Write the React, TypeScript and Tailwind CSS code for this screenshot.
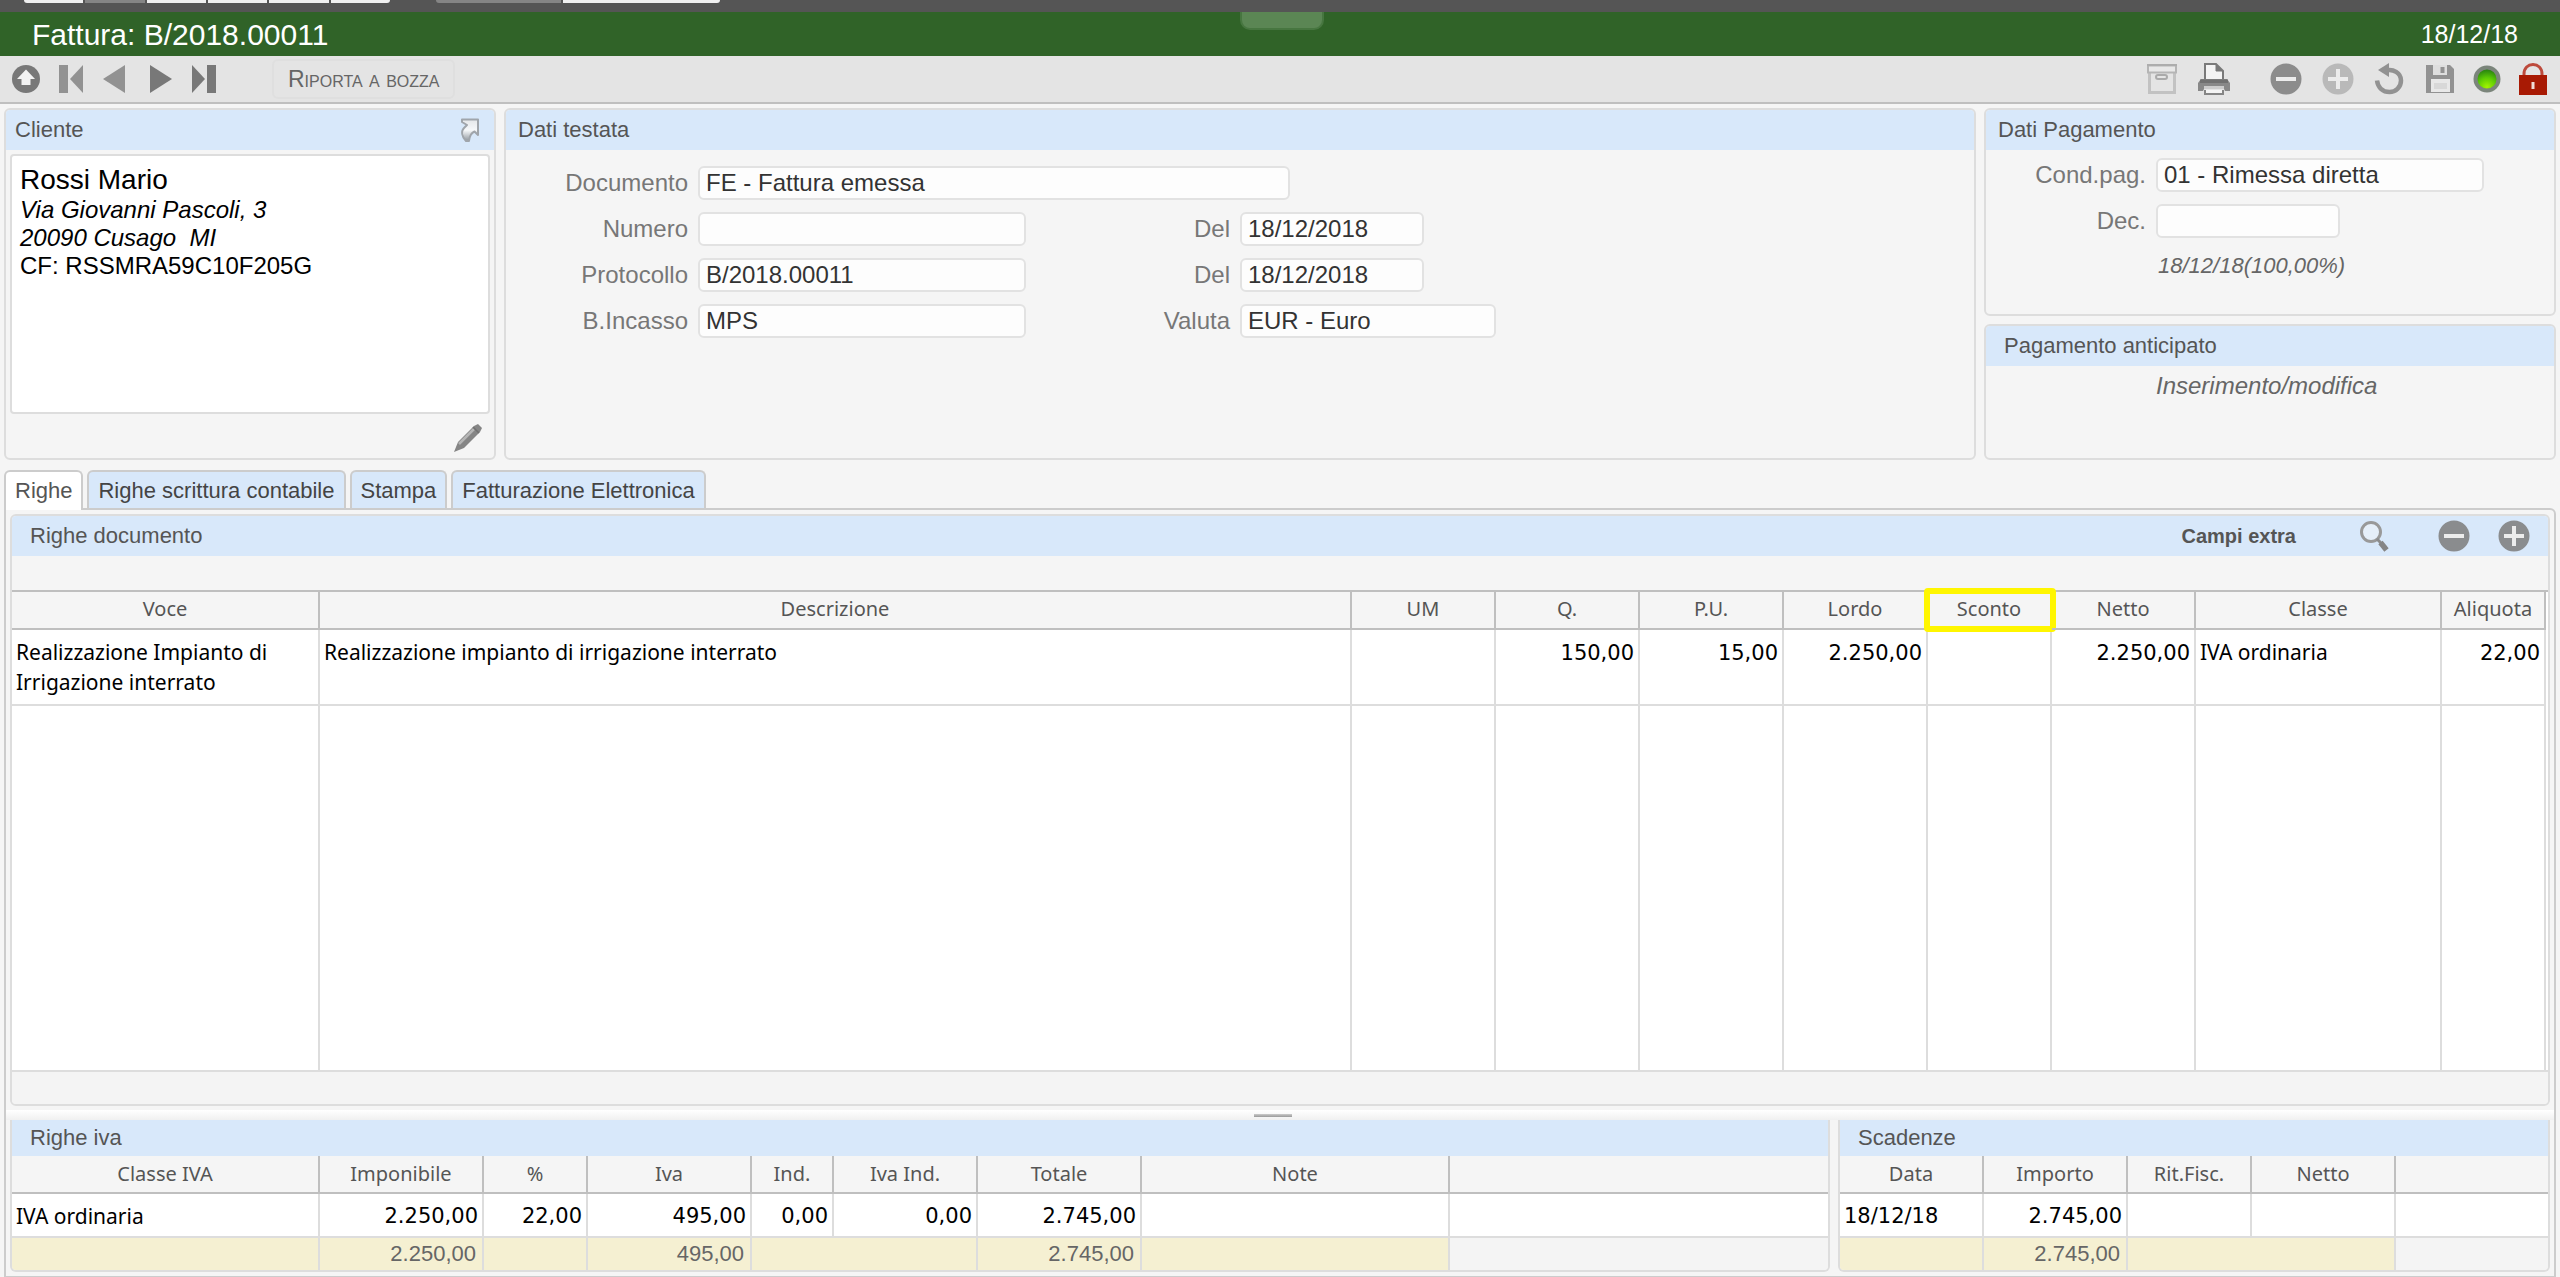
import React from 'react';

type Align = 'left' | 'right';

interface Column {
  label: string;
  width?: string;
  align?: Align;
}

const rowColumns: Column[] = [
  { label: 'Voce', width: 'w-[308px]' },
  { label: 'Descrizione' },
  { label: 'UM', width: 'w-36' },
  { label: 'Q.', width: 'w-36', align: 'right' },
  { label: 'P.U.', width: 'w-36', align: 'right' },
  { label: 'Lordo', width: 'w-36', align: 'right' },
  { label: 'Sconto', width: 'w-[124px]', align: 'right' },
  { label: 'Netto', width: 'w-36', align: 'right' },
  { label: 'Classe', width: 'w-[246px]' },
  { label: 'Aliquota', width: 'w-[104px]', align: 'right' },
];

const rowValues = [
  'Realizzazione Impianto di Irrigazione interrato',
  'Realizzazione impianto di irrigazione interrato',
  '',
  '150,00',
  '15,00',
  '2.250,00',
  '',
  '2.250,00',
  'IVA ordinaria',
  '22,00',
];

const ivaColumns: Column[] = [
  { label: 'Classe IVA', width: 'w-[308px]' },
  { label: 'Imponibile', width: 'w-[164px]', align: 'right' },
  { label: '%', width: 'w-[104px]', align: 'right' },
  { label: 'Iva', width: 'w-[164px]', align: 'right' },
  { label: 'Ind.', width: 'w-[82px]', align: 'right' },
  { label: 'Iva Ind.', width: 'w-36', align: 'right' },
  { label: 'Totale', width: 'w-[164px]', align: 'right' },
  { label: 'Note', width: 'w-[308px]' },
];

const dueColumns: Column[] = [
  { label: 'Data', width: 'w-36', align: 'left' },
  { label: 'Importo', width: 'w-36', align: 'right' },
  { label: 'Rit.Fisc.', width: 'w-[124px]', align: 'right' },
  { label: 'Netto', width: 'w-36', align: 'right' },
];

const tabs = ['Righe', 'Righe scrittura contabile', 'Stampa', 'Fatturazione Elettronica'];

const textFont = 'font-["Noto_Sans",sans-serif] text-[21px]';
const numberFont = 'font-["DejaVu_Sans",sans-serif] text-[21px]';

interface IconProps {
  size: string;
  box: string;
  children: React.ReactNode;
}

const Icon: React.FC<IconProps> = ({ size, box, children }) => (
  <svg className={`${size} block`} viewBox={box} fill="none" aria-hidden="true">
    {children}
  </svg>
);

const IconButton: React.FC<{ label: string; className?: string; children: React.ReactNode }> = ({
  label,
  className = '',
  children,
}) => (
  <button type="button" aria-label={label} className={`flex shrink-0 items-center justify-center ${className}`}>
    {children}
  </button>
);

const RoundIcon: React.FC<{ color: string; plus?: boolean }> = ({ color, plus = false }) => (
  <Icon size="size-8" box="0 0 32 32">
    <circle cx="16" cy="16" r="15.5" fill={color} />
    <path d="M6 16H26" stroke="#ececec" strokeWidth="4" />
    {plus && <path d="M16 6V26" stroke="#ececec" strokeWidth="4" />}
  </Icon>
);

interface FieldProps {
  id: string;
  label: string;
  value?: string;
  labelWidth: string;
  width: string;
}

const Field: React.FC<FieldProps> = ({ id, label, value = '', labelWidth, width }) => (
  <div className="flex items-center gap-2.5">
    <label htmlFor={id} className={`${labelWidth} shrink-0 text-right text-2xl leading-8 text-[#777]`}>
      {label}
    </label>
    <input
      id={id}
      defaultValue={value}
      className={`${width} h-[34px] rounded-md border-2 border-[#e2e2e2] bg-[#fdfdfd] px-1.5 text-2xl leading-7 text-[#333] outline-none`}
    />
  </div>
);

const Panel: React.FC<{ title: string; className?: string; titleClass?: string; action?: React.ReactNode; children?: React.ReactNode }> = ({
  title,
  className = '',
  titleClass = 'px-3',
  action,
  children,
}) => (
  <section className={`flex flex-col overflow-hidden rounded-md border-2 border-[#ddd] ${className}`}>
    <header className={`flex h-10 shrink-0 items-center justify-between bg-[#d8e8fa] ${titleClass}`}>
      <h2 className="text-[22px] leading-8 text-[#555]">{title}</h2>
      {action}
    </header>
    {children}
  </section>
);

const headCell = 'relative h-[38px] border-r-2 border-b-2 border-[#bfbfbf] px-0 pt-0 font-normal font-["Noto_Sans",sans-serif] text-xl leading-7 text-[#555]';

interface SummaryProps {
  title: string;
  className: string;
  columns: Column[];
  values: string[];
  totals: string[];
  // columns whose total cell runs into the next one
  merged: number;
}

const SummaryTable: React.FC<SummaryProps> = ({ title, className, columns, values, totals, merged }) => (
  <section className={`overflow-hidden rounded-b-md border-2 border-t-0 border-[#ddd] ${className}`}>
    <h2 className="h-9 bg-[#d8e8fa] px-[18px] text-[22px] leading-9 text-[#555]">{title}</h2>
    <table className="w-full table-fixed border-separate border-spacing-0">
      <thead>
        <tr>
          {columns.map((col) => (
            <th key={col.label} className={`${col.width} ${headCell} pb-0`}>
              {col.label}
            </th>
          ))}
          <th className="border-b-2 border-[#bfbfbf] p-0" aria-label="Altro"></th>
        </tr>
      </thead>
      <tbody className="bg-white text-black">
        <tr>
          {values.map((value, i) => (
            <td
              key={columns[i].label}
              className={`h-11 border-r-2 border-b-2 border-[#ddd] px-1 pt-0.5 pb-0 leading-[30px] ${
                columns[i].align ? numberFont : textFont
              } ${columns[i].align === 'right' ? 'text-right' : 'text-left'}`}
            >
              {value}
            </td>
          ))}
          <td className="border-b-2 border-[#ddd] p-0"></td>
        </tr>
      </tbody>
      <tfoot>
        <tr>
          {totals.map((total, i) => (
            <td
              key={columns[i].label}
              className={`h-8 border-r-2 bg-[#f5f0d2] px-1.5 py-0 text-right text-[22px] leading-8 text-[#666] ${
                i === merged ? 'border-[#f5f0d2]' : 'border-[#ddd]'
              }`}
            >
              {total}
            </td>
          ))}
          <td className="bg-[#f4f4f4] p-0"></td>
        </tr>
      </tfoot>
    </table>
  </section>
);

const Toolbar: React.FC = () => (
  <div className="flex h-12 shrink-0 items-center justify-between border-b-2 border-[#bfbfbf] bg-[#e4e4e4] px-3">
    <div className="flex items-center">
      <div className="flex items-center gap-[19px]">
        <IconButton label="Su">
          <Icon size="size-7" box="0 0 28 28">
            <circle cx="14" cy="14" r="14" fill="#787878" />
            <path d="M14 4.5L23 14H18.5V20H9.5V14H5Z" fill="#f2f2f2" />
          </Icon>
        </IconButton>
        <IconButton label="Primo">
          <Icon size="h-7 w-6" box="0 0 24 28">
            <path d="M0 0H9V28H0Z" fill="#929292" />
            <path d="M24 0V28L11 14Z" fill="#929292" />
          </Icon>
        </IconButton>
        <IconButton label="Precedente">
          <Icon size="h-7 w-6" box="0 0 24 28">
            <path d="M23 0V28L1 14Z" fill="#929292" />
          </Icon>
        </IconButton>
        <IconButton label="Successivo" className="ml-1">
          <Icon size="h-7 w-6" box="0 0 24 28">
            <path d="M1 0V28L23 14Z" fill="#787878" />
          </Icon>
        </IconButton>
        <IconButton label="Ultimo">
          <Icon size="h-7 w-6" box="0 0 24 28">
            <path d="M15 0H24V28H15Z" fill="#787878" />
            <path d="M0 0V28L13 14Z" fill="#787878" />
          </Icon>
        </IconButton>
      </div>
      <button
        type="button"
        className="ml-14 h-10 rounded-md border-2 border-[#dfdfdf] px-3.5 text-[23px] leading-8 text-[#666] [font-variant:small-caps]"
      >
        Riporta a bozza
      </button>
    </div>
    <div className="flex items-center gap-4">
      <IconButton label="Archivia" className="w-9">
        <Icon size="size-[30px]" box="0 0 30 30">
          <path d="M2.5 8V28.5H27.5V8" stroke="#c2c2c2" strokeWidth="3" />
          <path d="M1 1.5H29V8.5H1Z" fill="#e8e8e8" stroke="#b5b5b5" strokeWidth="2" />
          <path d="M0 1H30" stroke="#adadad" strokeWidth="2" />
          <rect x="9" y="11" width="11" height="4" rx="2" stroke="#aaa" strokeWidth="2" />
        </Icon>
      </IconButton>
      <IconButton label="Stampa" className="w-9">
        <Icon size="size-8" box="0 0 32 32">
          <path d="M7 17V1H18L25 8V17" fill="#f4f4f4" stroke="#7a7a7a" strokeWidth="2" />
          <path d="M18 1V8H25Z" fill="#7a7a7a" stroke="#7a7a7a" />
          <path d="M3 16H29L32 20V28H27L25 24H7L5 28H0V20Z" fill="#888" />
          <path d="M2 16.5H30V20H2Z" fill="#707070" />
          <path d="M6 23H26V26H6Z" fill="#ccc" />
          <path d="M7 27V31H25V27" fill="#f4f4f4" stroke="#858585" strokeWidth="2" />
        </Icon>
      </IconButton>
      <IconButton label="Elimina" className="ml-5 w-9">
        <RoundIcon color="#8c8c8c" />
      </IconButton>
      <IconButton label="Nuovo" className="w-9">
        <RoundIcon color="#b9b9b9" plus />
      </IconButton>
      <IconButton label="Annulla" className="w-9">
        <Icon size="size-8" box="0 0 32 32">
          <path d="M12 7.5C19 5.5 27 10 27 17.5C27 24.5 21.5 29 15.5 29C9 29 4 25 3 17.5" stroke="#929292" strokeWidth="4.5" />
          <path d="M4 7L15 0V14Z" fill="#929292" />
        </Icon>
      </IconButton>
      <IconButton label="Salva" className="w-8">
        <Icon size="size-7" box="0 0 28 28">
          <path d="M0 0H24L28 4V28H0Z" fill="#929292" />
          <path d="M7 0H21V10H7Z" fill="#dedede" />
          <path d="M14.5 2H18.5V8H14.5Z" fill="#929292" />
          <path d="M5 14H24V27H5Z" fill="#e8e8e8" />
          <path d="M8 18H21V24H8Z" fill="#d8d8d8" />
        </Icon>
      </IconButton>
      <IconButton label="Stato" className="w-[30px]">
        <Icon size="size-7" box="0 0 28 28">
          <defs>
            <radialGradient id="led" cx="0.5" cy="0.85" r="0.8">
              <stop offset="0" stopColor="#a4f400" />
              <stop offset="0.5" stopColor="#5ccb05" />
              <stop offset="1" stopColor="#217a12" />
            </radialGradient>
          </defs>
          <circle cx="14" cy="14" r="11.5" fill="url(#led)" stroke="#7b857b" strokeWidth="4" />
        </Icon>
      </IconButton>
      <IconButton label="Blocca" className="w-[30px]">
        <Icon size="h-8 w-7" box="0 0 28 32">
          <path d="M5 14V11C5 5 9 1.5 14 1.5C19 1.5 23 5 23 11V14" stroke="#bd4a3c" strokeWidth="3" />
          <path d="M0 12H28V32H0Z" fill="#a81a04" />
          <path d="M12.5 19H15.5V26H12.5Z" fill="#f0dcd8" />
        </Icon>
      </IconButton>
    </div>
  </div>
);

const App: React.FC = () => {
  return (
    <div className='flex h-screen flex-col bg-[#f5f5f5] font-["Liberation_Sans",Arial,sans-serif]'>
      <div className="flex h-3 shrink-0 items-start gap-[46px] bg-[#555] pl-6">
        <div className="flex h-[3px] w-[366px] gap-0.5 overflow-hidden rounded-b-sm">
          <span className="flex-1 bg-[#f0f0f0]"></span>
          <span className="flex-1 bg-[#858585]"></span>
          <span className="flex-1 bg-[#f0f0f0]"></span>
          <span className="flex-1 bg-[#f0f0f0]"></span>
          <span className="flex-1 bg-[#f0f0f0]"></span>
          <span className="flex-1 bg-[#f0f0f0]"></span>
        </div>
        <div className="flex h-[3px] w-[284px] gap-0.5 overflow-hidden rounded-b-sm">
          <span className="w-[125px] bg-[#858585]"></span>
          <span className="flex-1 bg-[#f0f0f0]"></span>
        </div>
      </div>

      <header className="relative flex h-11 shrink-0 items-center justify-between bg-[#306328] pt-0.5 pr-[42px] pl-8 text-white">
        <h1 className="text-[30px] leading-10">Fattura: B/2018.00011</h1>
        <div className="absolute top-0 left-1/2 h-[18px] w-[84px] -translate-x-[40px] rounded-b-[10px] border-2 border-t-0 border-[#477640] bg-[#5b8654]"></div>
        <span className="text-[25px]">18/12/18</span>
      </header>

      <Toolbar />

      <div className="flex h-[356px] shrink-0 gap-2 px-1 pt-1">
        <Panel
          title="Cliente"
          className="w-[492px]"
          titleClass="pr-3.5 pl-[9px]"
          action={
            <IconButton label="Apri cliente">
              <Icon size="h-6 w-5" box="0 0 20 24">
                <defs>
                  <linearGradient id="goto" x1="0" y1="0" x2="0" y2="1">
                    <stop offset="0" stopColor="#e4e6e9" />
                    <stop offset="0.5" stopColor="#f6f8fa" />
                    <stop offset="1" stopColor="#8f969d" />
                  </linearGradient>
                </defs>
                <path
                  d="M2 1.5H18V17L14.5 13.5C11 15 9.500 18 9 23H6C1.500 18 1 13 4 10L7 7L2 4Z"
                  fill="url(#goto)"
                  stroke="#a0a5ab"
                  strokeWidth="2"
                  strokeLinejoin="round"
                />
              </Icon>
            </IconButton>
          }
        >
          <div className="mx-1 mt-1 h-[260px] rounded border-2 border-[#ddd] bg-white px-2 pt-2 text-2xl leading-7 text-black">
            <p className="text-[28px] leading-8">Rossi Mario</p>
            <p className="italic">Via Giovanni Pascoli, 3</p>
            <p className="whitespace-pre italic">20090 Cusago  MI</p>
            <p>CF: RSSMRA59C10F205G</p>
          </div>
          <div className="flex flex-1 items-start justify-end px-3 pt-2.5">
            <IconButton label="Modifica cliente">
              <Icon size="size-7" box="0 0 28 28">
                <path d="M0 28L4 18L20 2L24 0L28 4L26 8L10 24Z" fill="#858585" />
                <path d="M5 20L20 5" stroke="#b5b5b5" strokeWidth="2.5" />
                <path d="M19 3L25 9" stroke="#707070" strokeWidth="1.5" />
              </Icon>
            </IconButton>
          </div>
        </Panel>

        <Panel title="Dati testata" className="flex-1">
          <div className="flex flex-col gap-3 pt-4">
            <Field id="documento" label="Documento" value="FE - Fattura emessa" labelWidth="w-[182px]" width="w-[592px]" />
            <div className="flex">
              <Field id="numero" label="Numero" labelWidth="w-[182px]" width="w-[328px]" />
              <Field id="numero-del" label="Del" value="18/12/2018" labelWidth="w-[204px]" width="w-[184px]" />
            </div>
            <div className="flex">
              <Field id="protocollo" label="Protocollo" value="B/2018.00011" labelWidth="w-[182px]" width="w-[328px]" />
              <Field id="protocollo-del" label="Del" value="18/12/2018" labelWidth="w-[204px]" width="w-[184px]" />
            </div>
            <div className="flex">
              <Field id="incasso" label="B.Incasso" value="MPS" labelWidth="w-[182px]" width="w-[328px]" />
              <Field id="valuta" label="Valuta" value="EUR - Euro" labelWidth="w-[204px]" width="w-[256px]" />
            </div>
          </div>
        </Panel>

        <div className="flex w-[572px] flex-col gap-2">
          <Panel title="Dati Pagamento" className="h-52">
            <div className="flex flex-col gap-3 pt-2">
              <Field id="condizione" label="Cond.pag." value="01 - Rimessa diretta" labelWidth="w-40" width="w-[328px]" />
              <Field id="decorrenza" label="Dec." labelWidth="w-40" width="w-[184px]" />
              <p className="pl-[172px] text-[22px] leading-8 text-[#666] italic">18/12/18(100,00%)</p>
            </div>
          </Panel>
          <Panel title="Pagamento anticipato" className="flex-1" titleClass="px-[18px]">
            <div className="pt-1 pl-[170px]">
              <button type="button" className="text-2xl leading-8 text-[#666] italic">
                Inserimento/modifica
              </button>
            </div>
          </Panel>
        </div>
      </div>

      <div role="tablist" className="relative mt-2.5 flex h-10 shrink-0 gap-1 px-1">
        {tabs.map((tab, i) => (
          <button
            key={tab}
            type="button"
            role="tab"
            aria-selected={i === 0}
            className={`rounded-t-md border-2 border-b-0 border-[#ccc] px-[9px] text-[22px] ${
              i === 0 ? 'h-10 bg-white pb-0.5 text-[#555]' : 'h-[38px] bg-[#d8e8fa] text-[#444]'
            }`}
          >
            {tab}
          </button>
        ))}
      </div>

      <main className="mx-1 -mt-0.5 flex min-h-0 flex-1 flex-col rounded-tr-md border-2 border-b border-[#ccc]">
        <div className="flex min-h-0 flex-1 flex-col p-1">
          <Panel
            title="Righe documento"
            className="min-h-0 flex-1"
            titleClass="px-[18px]"
            action={
              <div className="flex items-center">
                <button type="button" className="mr-16 text-xl font-bold text-[#555]">
                  Campi extra
                </button>
                <IconButton label="Cerca" className="mr-12">
                  <Icon size="h-8 w-[30px]" box="0 0 30 32">
                    <circle cx="11" cy="12" r="9.5" fill="#e6eff9" stroke="#999" strokeWidth="3" />
                    <path d="M17 19L22 24" stroke="#8c8c8c" strokeWidth="3" />
                    <path d="M20.5 22.5L26.5 30" stroke="#858585" strokeWidth="5.5" />
                  </Icon>
                </IconButton>
                <IconButton label="Elimina riga" className="mr-7">
                  <RoundIcon color="#8a8c8e" />
                </IconButton>
                <IconButton label="Aggiungi riga">
                  <RoundIcon color="#8a8c8e" plus />
                </IconButton>
              </div>
            }
          >
            <div className="mt-[34px] min-h-0 flex-1 border-y-2 border-t-[#bfbfbf] border-b-[#ddd] bg-white pr-0.5">
              <table className="h-full w-full table-fixed border-separate border-spacing-0">
                <thead className="bg-[#f5f5f5]">
                  <tr className="h-[38px]">
                    {rowColumns.map((col) => (
                      <th key={col.label} className={`${col.width ?? ''} ${headCell} pb-0.5`}>
                        {col.label}
                        {col.label === 'Sconto' && (
                          <span className="absolute -top-1 -right-1.5 -bottom-1 -left-1 rounded-sm border-[6px] border-[#fff600]"></span>
                        )}
                      </th>
                    ))}
                  </tr>
                </thead>
                <tbody className="text-black">
                  <tr className="h-[76px]">
                    {rowColumns.map((col, i) => (
                      <td
                        key={col.label}
                        className={`border-r-2 border-b-2 border-[#ddd] px-1 pb-0 align-top leading-[30px] ${
                          col.align === 'right' ? `pt-2 text-right ${numberFont}` : `pt-[7px] ${textFont}`
                        }`}
                      >
                        {rowValues[i]}
                      </td>
                    ))}
                  </tr>
                  <tr>
                    {rowColumns.map((col) => (
                      <td key={col.label} className="border-r-2 border-[#ddd] p-0"></td>
                    ))}
                  </tr>
                </tbody>
              </table>
            </div>
            <div className="h-8 shrink-0 bg-[#f4f4f4]"></div>
          </Panel>
        </div>

        <div className="flex h-2.5 shrink-0 items-center justify-center bg-linear-to-b from-white to-[#f0f0f0]">
          <span className="mr-3.5 h-[3px] w-[38px] bg-linear-to-b from-[#ccc] to-[#999]"></span>
        </div>

        <div className="flex shrink-0 gap-2 px-1 pb-1">
          <SummaryTable
            title="Righe iva"
            className="flex-1"
            columns={ivaColumns}
            values={['IVA ordinaria', '2.250,00', '22,00', '495,00', '0,00', '0,00', '2.745,00', '']}
            totals={['', '2.250,00', '', '495,00', '', '', '2.745,00', '']}
            merged={4}
          />
          <SummaryTable
            title="Scadenze"
            className="w-[712px]"
            columns={dueColumns}
            values={['18/12/18', '2.745,00', '', '']}
            totals={['', '2.745,00', '', '']}
            merged={2}
          />
        </div>
      </main>
    </div>
  );
};

export default App;
